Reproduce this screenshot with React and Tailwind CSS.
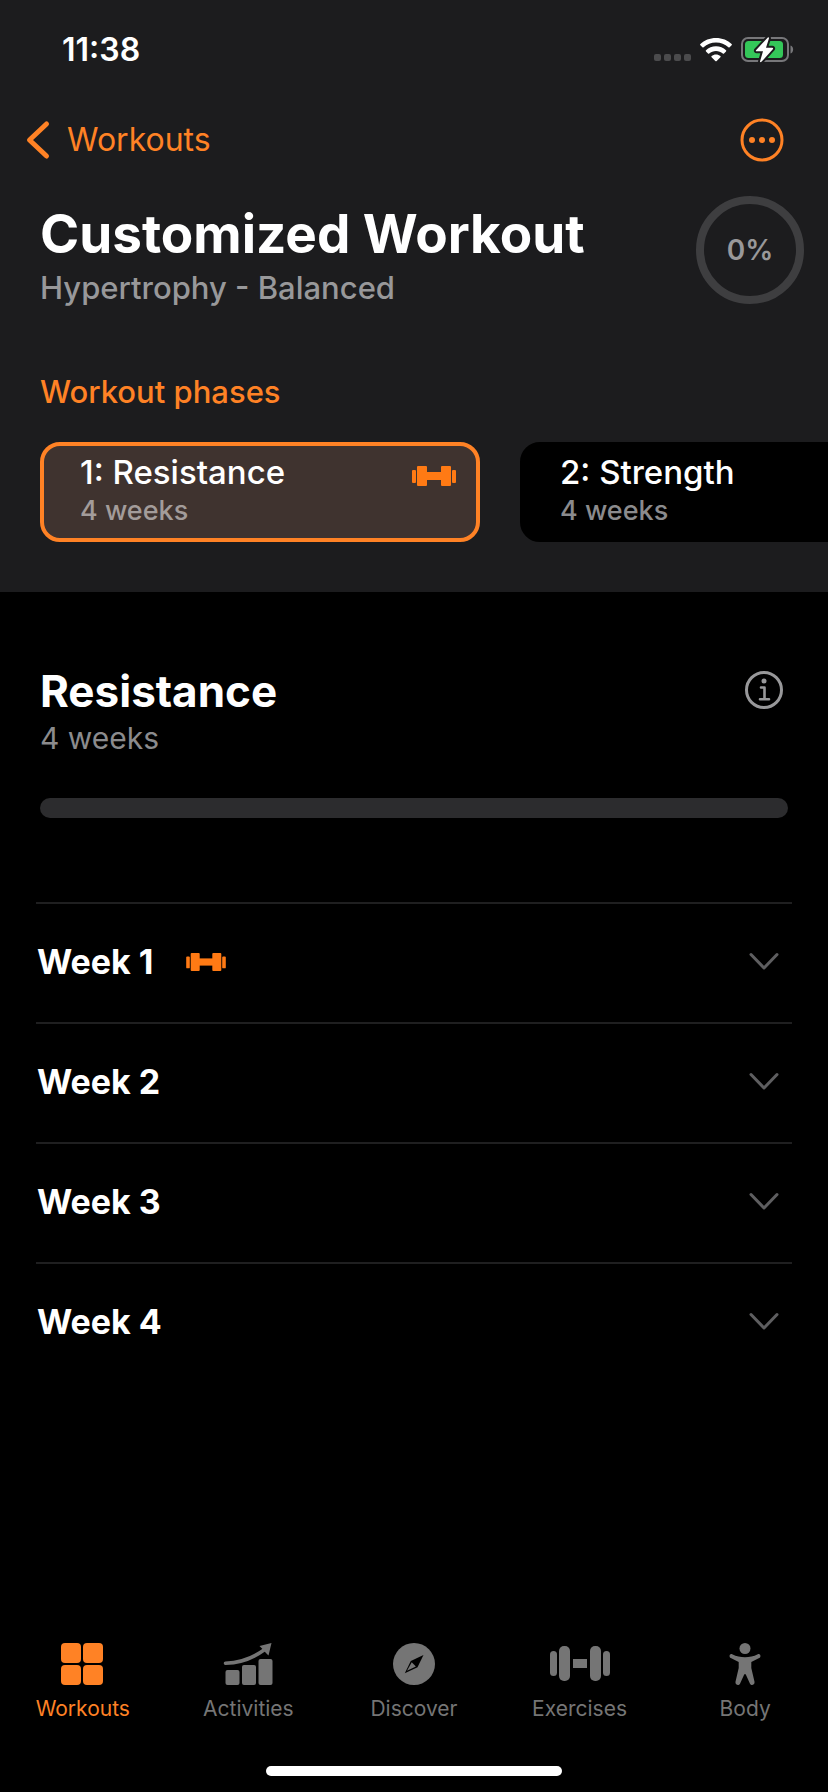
import React, { useState } from "react";

const phases = [
  { id: 1, name: "Resistance", length: "4 weeks", current: true },
  { id: 2, name: "Strength", length: "4 weeks", current: false },
];

const weeks = [
  { id: 1, label: "Week 1", current: true },
  { id: 2, label: "Week 2", current: false },
  { id: 3, label: "Week 3", current: false },
  { id: 4, label: "Week 4", current: false },
];

const SmallDumbbell = ({ className }) => (
  <svg viewBox="0 0 44 20" fill="#ff7a14" className={className} aria-hidden="true">
    <rect x="0" y="4" width="4" height="13" rx="1" />
    <rect x="5" y="0" width="10" height="20" rx="1" />
    <rect x="14" y="6" width="16" height="8" />
    <rect x="29" y="0" width="10" height="20" rx="1" />
    <rect x="40" y="4" width="4" height="13" rx="1" />
  </svg>
);

const StatusIcons = () => (
  <div className="flex items-center">
    <svg viewBox="0 0 38 8" fill="#4b4b4d" className="mt-4 h-2 w-[38px]" aria-hidden="true">
      <rect x="0" y="0" width="7" height="7" rx="2" />
      <rect x="10" y="0" width="7" height="7" rx="2" />
      <rect x="20" y="0" width="7" height="7" rx="2" />
      <rect x="30" y="0" width="7" height="7" rx="2" />
    </svg>
    <svg viewBox="0 0 32 24" className="ml-2 h-6 w-8" fill="#fff" aria-hidden="true">
      <path d="M16 0C22.200 0 27.800 2.300 31.600 6.100Q32.200 6.700 31.600 7.300L29.600 9.300Q29 9.900 28.400 9.300C25.100 6.200 20.800 4.600 16 4.600S6.900 6.200 3.600 9.300Q3 9.900 2.400 9.300L.4 7.300Q-.2 6.700 .4 6.100C4.200 2.300 9.800 0 16 0Z" />
      <path d="M16 8.300C19.900 8.300 23.400 9.800 26 12.200Q26.600 12.800 26 13.400L24 15.400Q23.400 16 22.800 15.500C21 13.900 18.600 12.900 16 12.900S11 13.900 9.200 15.500Q8.600 16 8 15.400L6 13.400Q5.400 12.800 6 12.200C8.600 9.800 12.100 8.300 16 8.300Z" />
      <path d="M16 16.500C17.700 16.500 19.200 17.100 20.400 18.100Q21 18.700 20.400 19.300L16.700 23Q16 23.700 15.300 23L11.600 19.300Q11 18.700 11.600 18.100C12.800 17.100 14.300 16.500 16 16.500Z" />
    </svg>
    <svg viewBox="0 0 54 28" className="ml-2 h-7 w-[54px]" aria-hidden="true">
      <rect x="2" y="2" width="46" height="23" rx="6" fill="none" stroke="#77777a" strokeWidth="2" />
      <path d="M50.500 9.500C54 10.500 54 16.500 50.500 17.500Z" fill="#77777a" />
      <rect x="5" y="5" width="38" height="17" rx="3.500" fill="#34c759" />
      <path
        d="M27.800 1.500L16 14.200Q15.500 15.300 16.700 15.300H23L20 25.500Q20.200 26.800 21.400 25.800L33 13Q33.500 11.700 32.200 11.700H26L29 2.300Q29 1 27.800 1.500Z"
        fill="#fff"
        stroke="#1c1c1e"
        strokeWidth="4"
        strokeLinejoin="round"
        paintOrder="stroke"
      />
    </svg>
  </div>
);

const ProgressRing = ({ percent }) => (
  <div className="relative flex size-[108px] shrink-0 items-center justify-center">
    <svg viewBox="0 0 108 108" className="absolute inset-0 size-full" fill="none" aria-hidden="true">
      <circle cx="54" cy="54" r="50" stroke="#3e3e40" strokeWidth="8" />
    </svg>
    <span className="text-[28px] leading-8 font-semibold text-[#98989a]">{percent}%</span>
  </div>
);

const WorkoutsIcon = () => (
  <svg viewBox="0 0 44 42" fill="currentColor" className="h-[42px] w-11" aria-hidden="true">
    <rect x="0" y="0" width="20" height="20" rx="4" />
    <rect x="22" y="0" width="20" height="20" rx="4" />
    <rect x="0" y="22" width="20" height="20" rx="4" />
    <rect x="22" y="22" width="20" height="20" rx="4" />
  </svg>
);

const ActivitiesIcon = () => (
  <svg viewBox="0 0 50 42" fill="currentColor" className="h-[42px] w-[50px]" aria-hidden="true">
    <rect x="2.500" y="27" width="14" height="15" rx="2" />
    <rect x="19" y="22" width="14" height="20" rx="2" />
    <rect x="35.500" y="16" width="14" height="26" rx="2" />
    <path d="M2.500 20.300Q24 19.500 41 7" fill="none" stroke="currentColor" strokeWidth="3.600" strokeLinecap="round" />
    <path d="M48.500 0L45.500 12.500L42.500 9.500L39.500 6L36.500 3Z" />
  </svg>
);

const DiscoverIcon = () => (
  <svg viewBox="0 0 42 42" className="size-[42px]" aria-hidden="true">
    <circle cx="21" cy="21" r="21" fill="currentColor" />
    <path d="M30.500 12L17.800 18L11.800 30.200L24.500 24.200Z" fill="#000" />
    <path d="M18.700 19.200L22.900 23.500L14 27.800Z" fill="currentColor" />
  </svg>
);

const ExercisesIcon = () => (
  <svg viewBox="0 0 60 42" fill="currentColor" className="h-[42px] w-[60px]" aria-hidden="true">
    <rect x="0" y="8" width="7" height="25" rx="3.500" />
    <rect x="9" y="3" width="11" height="35" rx="5" />
    <rect x="23" y="16" width="14" height="9" />
    <rect x="40" y="3" width="11" height="35" rx="5" />
    <rect x="53" y="8" width="7" height="25" rx="3.500" />
  </svg>
);

const BodyIcon = () => (
  <svg viewBox="0 0 32 42" fill="currentColor" className="h-[42px] w-8" aria-hidden="true">
    <circle cx="16" cy="5.500" r="5.500" />
    <path d="M3.200 11.200C7.500 13.400 11.500 14.200 16 14.200S24.500 13.400 28.800 11.200C31.600 10.400 32.400 13.800 30.200 15L22.300 18.900V25L25.500 38.700C26 42 22.200 43 21 40.700L16.800 31.500Q16 30.400 15.200 31.500L11 40.700C9.800 43 6 42 6.500 38.700L9.700 25V18.900L1.800 15C-.4 13.800 .4 10.400 3.200 11.200Z" />
  </svg>
);

const tabs = [
  { name: "Workouts", Icon: WorkoutsIcon },
  { name: "Activities", Icon: ActivitiesIcon },
  { name: "Discover", Icon: DiscoverIcon },
  { name: "Exercises", Icon: ExercisesIcon },
  { name: "Body", Icon: BodyIcon },
];

const App = () => {
  const [activeTab, setActiveTab] = useState("Workouts");

  return (
    <div className="flex min-h-screen flex-col bg-black font-['Inter',sans-serif] text-white">
      <header className="bg-[#1c1c1e] pb-[50px]">
        {/* Status bar */}
        <div className="flex h-[100px] items-center justify-between pr-[34px] pl-[62px]">
          <span className="text-[32px] leading-10 font-semibold">11:38</span>
          <StatusIcons />
        </div>

        {/* Navigation */}
        <div className="flex h-20 items-center justify-between pr-11 pl-6">
          <a href="#workouts" className="flex items-center gap-[15px] text-[#ff8225]">
            <svg viewBox="0 0 28 40" className="h-10 w-7" fill="none" aria-hidden="true">
              <path d="M22.500 4L5.500 20L22.500 36" stroke="currentColor" strokeWidth="5" strokeLinecap="round" strokeLinejoin="round" />
            </svg>
            <span className="text-[32px] leading-10">Workouts</span>
          </a>
          <button type="button" aria-label="More options" className="text-[#ff8225]">
            <svg viewBox="0 0 44 44" className="size-11" aria-hidden="true">
              <circle cx="22" cy="22" r="20" fill="none" stroke="currentColor" strokeWidth="3" />
              <circle cx="12" cy="22" r="3" fill="currentColor" />
              <circle cx="22" cy="22" r="3" fill="currentColor" />
              <circle cx="32" cy="22" r="3" fill="currentColor" />
            </svg>
          </button>
        </div>

        {/* Title */}
        <div className="flex items-start justify-between pt-4 pr-6 pl-10">
          <div className="pt-2">
            <h1 className="text-[53px] leading-[60px] font-bold">Customized Workout</h1>
            <p className="text-[31px] leading-[48px] font-medium text-[#98989a]">Hypertrophy - Balanced</p>
          </div>
          <ProgressRing percent={0} />
        </div>

        <h2 className="mt-[60px] pl-10 text-[31px] leading-10 font-medium text-[#ff8225]">Workout phases</h2>

        {/* Phase cards */}
        <div className="mt-[30px] flex gap-10 overflow-x-auto px-10 [scrollbar-width:none]">
          {phases.map((phase) => (
            <button
              key={phase.id}
              type="button"
              className={`flex h-[100px] w-[440px] shrink-0 items-start justify-between rounded-[20px] border-4 pt-1.5 pr-5 pl-9 text-left font-medium ${
                phase.current ? "border-[#ff8225] bg-[#3f332f]" : "border-black bg-black"
              }`}
            >
              <span className="flex flex-col">
                <span className="text-[33px] leading-10">
                  {phase.id}: {phase.name}
                </span>
                <span className={`text-[27px] leading-[38px] ${phase.current ? "text-[#a39c9a]" : "text-[#8b8b8d]"}`}>
                  {phase.length}
                </span>
              </span>
              {phase.current && <SmallDumbbell className="mt-3.5 h-5 w-11" />}
            </button>
          ))}
        </div>
      </header>

      <main className="flex-1 px-9">
        <div className="flex items-start justify-between pt-[72px] pr-2 pl-1">
          <div>
            <h2 className="text-[44px] leading-[54px] font-bold">Resistance</h2>
            <p className="text-[30px] leading-10 text-[#8b8b8d]">4 weeks</p>
          </div>
          <button type="button" aria-label="About this phase" className="mt-1.5 text-[#98989a]">
            <svg viewBox="0 0 40 40" className="size-10" fill="none" stroke="currentColor" aria-hidden="true">
              <circle cx="20" cy="20" r="17.500" strokeWidth="3" />
              <circle cx="20" cy="11" r="2.500" fill="currentColor" stroke="none" />
              <path d="M17 17.500H20.500V29.300M16 29.300H25" strokeWidth="2.600" strokeLinecap="round" strokeLinejoin="round" />
            </svg>
          </button>
        </div>

        <div
          role="progressbar"
          aria-label="Phase progress"
          aria-valuenow={0}
          className="mx-1 mt-10 h-5 rounded-full bg-[#2c2c2e]"
        />

        {/* Week list */}
        <ul className="mt-[84px]">
          {weeks.map((week) => (
            <li key={week.id} className="border-t-2 border-[#1f1f20]">
              <button type="button" className="flex h-[118px] w-full items-center justify-between pr-3 pb-0.5 pl-px">
                <span className="flex items-center gap-8">
                  <span className="text-[34px] leading-10 font-bold">{week.label}</span>
                  {week.current && <SmallDumbbell className="h-[18px] w-10" />}
                </span>
                <svg viewBox="0 0 32 20" className="h-5 w-8" fill="none" aria-hidden="true">
                  <path d="M3 2.500L16 16L29 2.500" stroke="#5e5e60" strokeWidth="3" strokeLinecap="round" strokeLinejoin="round" />
                </svg>
              </button>
            </li>
          ))}
        </ul>
      </main>

      {/* Tab bar */}
      <footer className="pb-4">
        <nav className="flex">
          {tabs.map(({ name, Icon }) => (
            <button
              key={name}
              type="button"
              onClick={() => setActiveTab(name)}
              className={`flex flex-1 basis-0 flex-col items-center gap-3 ${
                activeTab === name ? "text-[#ff8225]" : "text-[#757575]"
              }`}
            >
              <Icon />
              <span className="text-[21px] leading-6">{name}</span>
            </button>
          ))}
        </nav>
        <div className="mx-auto mt-[45px] h-2.5 w-[296px] rounded-full bg-white" />
      </footer>
    </div>
  );
};

export default App;
